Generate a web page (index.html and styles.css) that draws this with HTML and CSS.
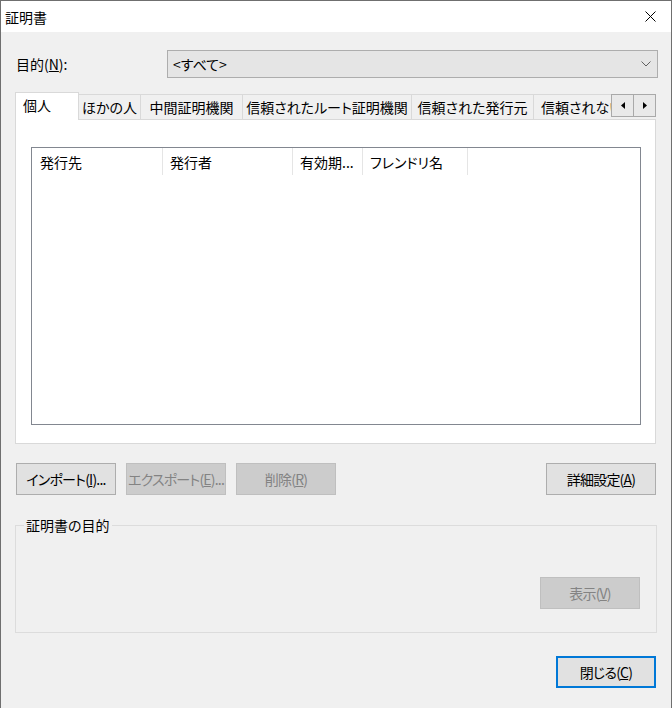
FILE: index.html
```html
<!DOCTYPE html>
<html lang="ja">
<head>
    <meta charset="UTF-8">
    <title>証明書</title>
    <link rel="stylesheet" href="styles.css">
</head>
<body>
    <div class="window">
        <div class="titlebar">
            <span class="title">証明書</span>
            <span class="close-btn">
                <svg width="11" height="11" viewBox="0 0 11 11"><path d="M0.5 0.5L10.5 10.5M10.5 0.5L0.5 10.5" stroke="#000" stroke-width="1"/></svg>
            </span>
        </div>

        <div class="content">
            <div class="purpose-row">
                <span class="purpose-label">目的(<u>N</u>):</span>
                <div class="combo">
                    <span>&lt;すべて&gt;</span>
                    <svg width="10" height="6" viewBox="0 0 10 6"><polyline points="0.5,0.5 5,5 9.5,0.5" fill="none" stroke="#606060" stroke-width="1"/></svg>
                </div>
            </div>

            <div class="tabs">
                <div class="tab-strip">
                    <div class="tab tab-selected">個人</div>
                    <div class="tab tab-others">ほかの人</div>
                    <div class="tab tab-inter">中間証明機関</div>
                    <div class="tab tab-root">信頼されたルート証明機関</div>
                    <div class="tab tab-publisher">信頼された発行元</div>
                    <div class="tab tab-clipped">信頼されない発行元</div>
                    <div class="tab-scroll">
                        <span class="scroll-btn">
                            <svg width="4" height="7" viewBox="0 0 4 7"><polygon points="4,0 4,7 0,3.5" fill="#000"/></svg>
                        </span>
                        <span class="scroll-btn">
                            <svg width="4" height="7" viewBox="0 0 4 7"><polygon points="0,0 0,7 4,3.5" fill="#000"/></svg>
                        </span>
                    </div>
                </div>
                <div class="tab-panel">
                    <div class="listview">
                        <div class="list-header">
                            <div class="col col-subject">発行先</div>
                            <div class="col col-issuer">発行者</div>
                            <div class="col col-expiry">有効期...</div>
                            <div class="col col-name">フレンドリ名</div>
                        </div>
                    </div>
                </div>
            </div>

            <div class="button-row">
                <button class="btn">インポート(<u>I</u>)...</button>
                <button class="btn" disabled>エクスポート(<u>E</u>)...</button>
                <button class="btn" disabled>削除(<u>R</u>)</button>
                <button class="btn btn-wide btn-push">詳細設定(<u>A</u>)</button>
            </div>

            <div class="group">
                <div class="group-label">証明書の目的</div>
                <div class="group-actions">
                    <button class="btn" disabled>表示(<u>V</u>)</button>
                </div>
            </div>

            <div class="footer">
                <button class="btn btn-default">閉じる(<u>C</u>)</button>
            </div>
        </div>
    </div>
</body>
</html>
```

FILE: styles.css
```css
body {
    margin: 0;
    font-family: "Noto Sans CJK JP", "Noto Sans", sans-serif;
    font-size: 14px;
    line-height: 20px;
    font-feature-settings: "palt";
    color: #000;
    background: #f0f0f0;
}

.window {
    width: 672px;
    height: 708px;
    box-sizing: border-box;
    border: 1px solid #6f6f6f;
    border-bottom: none;
    background: #f0f0f0;
}

.titlebar {
    height: 31px;
    background: #fff;
    display: flex;
    align-items: center;
    justify-content: space-between;
    padding-left: 4px;
}

.close-btn {
    width: 42px;
    height: 31px;
    display: flex;
    align-items: center;
    justify-content: center;
}

.content {
    padding: 0 15px 0 14px;
}

.purpose-row {
    display: flex;
    align-items: center;
    margin-top: 18px;
    height: 28px;
}

.purpose-label {
    width: 151px;
    padding-left: 1px;
}

.combo {
    flex: 1;
    margin-right: -2px;
    height: 28px;
    box-sizing: border-box;
    border: 1px solid #adadad;
    background: #e5e5e5;
    display: flex;
    align-items: center;
    justify-content: space-between;
    padding: 0 6px 0 5px;
}

/* tabs */
.tabs {
    margin-top: 14px;
}

.tab-strip {
    display: flex;
    align-items: flex-end;
    height: 28px;
    margin-bottom: -1px;
    position: relative;
    z-index: 1;
}

.tab {
    height: 25px;
    box-sizing: border-box;
    margin-bottom: 1px;
    border-top: 1px solid #d9d9d9;
    border-right: 1px solid #d9d9d9;
    background: #f0f0f0;
    display: flex;
    align-items: center;
    justify-content: center;
    white-space: nowrap;
    overflow: hidden;
    flex-shrink: 0;
}

.tab-selected {
    width: 64px;
    height: 28px;
    margin-bottom: 0;
    border-left: 1px solid #d9d9d9;
    background: #fff;
    justify-content: flex-start;
    padding: 0 0 4px 7px;
}

.tab-others { width: 62px; }
.tab-inter { width: 102px; }
.tab-root { width: 169px; }
.tab-publisher { width: 122px; }

.tab-clipped {
    flex: 1;
    flex-shrink: 1;
    min-width: 0;
    border-right: none;
    justify-content: flex-start;
    padding-left: 7px;
}

.tab-scroll {
    align-self: flex-start;
    margin-top: 2px;
    display: flex;
}

.scroll-btn {
    width: 23px;
    height: 23px;
    box-sizing: border-box;
    border: 1px solid #a9a9a9;
    background: #e9e9e9;
    display: flex;
    align-items: center;
    justify-content: center;
}

.scroll-btn + .scroll-btn {
    border-left: none;
    width: 22px;
}

.tab-panel {
    border: 1px solid #d9d9d9;
    background: #fff;
    padding: 27px 14px 18px 15px;
}

.listview {
    height: 278px;
    box-sizing: border-box;
    border: 1px solid #828790;
    background: #fff;
}

.list-header {
    display: flex;
    height: 27px;
}

.col {
    box-sizing: border-box;
    border-right: 1px solid #e5e5e5;
    padding: 4px 0 0 7px;
    white-space: nowrap;
}

.col-subject { width: 131px; padding-left: 8px; }
.col-issuer { width: 130px; }
.col-expiry { width: 70px; }
.col-name { width: 105px; }

/* buttons */
.button-row {
    display: flex;
    gap: 10px;
    margin-top: 19px;
    padding-left: 1px;
}

.btn {
    width: 100px;
    height: 32px;
    box-sizing: border-box;
    padding: 0;
    font: inherit;
    letter-spacing: -0.8px;
    color: #000;
    background: #e1e1e1;
    border: 1px solid #adadad;
    white-space: nowrap;
}

.btn:disabled {
    background: #cccccc;
    border-color: #bfbfbf;
    color: #838383;
}

.btn-wide {
    width: 110px;
}

.btn-push {
    margin-left: auto;
}

.btn-default {
    border: 2px solid #0078d7;
}

/* group box */
.group {
    margin-top: 30px;
    margin-right: -1px;
    border: 1px solid #dcdcdc;
    padding: 0 16px 23px;
}

.group-label {
    width: fit-content;
    margin: -11px 0 0 -8px;
    padding: 0 2px;
    background: #f0f0f0;
}

.group-actions {
    display: flex;
    justify-content: flex-end;
    margin-top: 42px;
}

.footer {
    display: flex;
    justify-content: flex-end;
    margin-top: 23px;
}
```
